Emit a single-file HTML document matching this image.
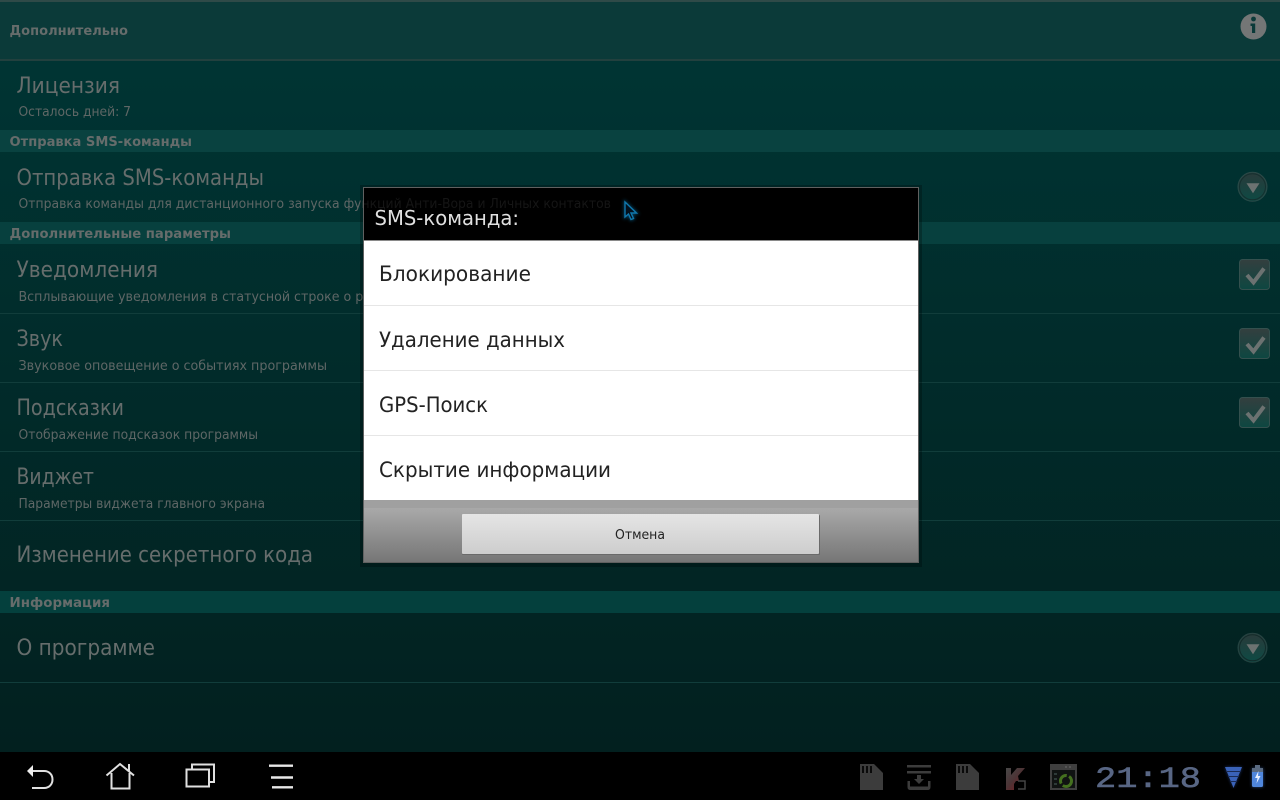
<!DOCTYPE html>
<html lang="ru">
<head>
<meta charset="utf-8">
<title>Дополнительно</title>
<style>
html,body{margin:0;padding:0;width:1280px;height:800px;overflow:hidden;background:#000}
svg{display:block}
text{font-family:"DejaVu Sans","Liberation Sans",sans-serif}
.h{font-size:13px;font-weight:bold;fill:#666c6b}
.t{font-size:22px;fill:#666d6c}
.s{font-size:13.5px;fill:#5f6766}
.i{font-size:21.5px;fill:#222}
</style>
</head>
<body>
<svg xmlns="http://www.w3.org/2000/svg" width="1280" height="800" viewBox="0 0 1280 800">
<defs>
<linearGradient id="bg" x1="0" y1="0" x2="0" y2="1"><stop offset="0" stop-color="#003635"/><stop offset="1" stop-color="#02201f"/></linearGradient>
<linearGradient id="foot" x1="0" y1="0" x2="0" y2="1"><stop offset="0" stop-color="#a9a9a9"/><stop offset="1" stop-color="#767676"/></linearGradient>
<linearGradient id="btn" x1="0" y1="0" x2="0" y2="1"><stop offset="0" stop-color="#e5e5e5"/><stop offset="1" stop-color="#cdcdcd"/></linearGradient>
<linearGradient id="cb" x1="0" y1="0" x2="0" y2="1"><stop offset="0" stop-color="#343f3f"/><stop offset="1" stop-color="#0d4741"/></linearGradient>
<linearGradient id="dd" x1="0" y1="0" x2="0" y2="1"><stop offset="0" stop-color="#2a3a3a"/><stop offset="1" stop-color="#0d4a44"/></linearGradient>
<linearGradient id="red" x1="0" y1="0" x2="1" y2="1"><stop offset="0" stop-color="#484848"/><stop offset=".45" stop-color="#4c3436"/><stop offset="1" stop-color="#7c1a1f"/></linearGradient>
<filter id="gl" x="-50%" y="-50%" width="200%" height="200%"><feGaussianBlur stdDeviation="1.5"/></filter>
<clipPath id="leftc"><rect x="0" y="0" width="363" height="800"/></clipPath>
<clipPath id="titlec"><rect x="364" y="188" width="554" height="52"/></clipPath>
</defs>

<rect width="1280" height="752" fill="url(#bg)"/>
<rect width="1280" height="2" fill="#2f4a48"/>
<rect y="2" width="1280" height="57" fill="#0b3a39"/>
<rect y="59" width="1280" height="2" fill="#22403e"/>
<rect y="130" width="1280" height="22" fill="#094240"/>
<rect y="222" width="1280" height="22" fill="#07403e"/>
<rect y="591" width="1280" height="22" fill="#04403d"/>
<g fill="#113d3b">
<rect y="313" width="1280" height="1"/><rect y="382" width="1280" height="1"/><rect y="451" width="1280" height="1"/><rect y="520" width="1280" height="1"/><rect y="682" width="1280" height="1"/>
</g>

<text class="h" x="9.500" y="35" textLength="118.500" lengthAdjust="spacingAndGlyphs">Дополнительно</text>
<text class="t" x="16.500" y="93" textLength="103.500" lengthAdjust="spacingAndGlyphs">Лицензия</text>
<text class="s" x="18.500" y="116" textLength="112.500" lengthAdjust="spacingAndGlyphs">Осталось дней: 7</text>
<text class="h" x="9.500" y="146" textLength="182.500" lengthAdjust="spacingAndGlyphs">Отправка SMS-команды</text>
<text class="t" x="16.500" y="185" textLength="247.500" lengthAdjust="spacingAndGlyphs">Отправка SMS-команды</text>
<text class="s" x="18.500" y="208" textLength="592.500" lengthAdjust="spacingAndGlyphs">Отправка команды для дистанционного запуска функций Анти-Вора и Личных контактов</text>
<text class="h" x="9.500" y="238" textLength="221.500" lengthAdjust="spacingAndGlyphs">Дополнительные параметры</text>
<text class="t" x="16.500" y="277" textLength="141.500" lengthAdjust="spacingAndGlyphs">Уведомления</text>
<text class="s" x="18.500" y="301" textLength="462.500" lengthAdjust="spacingAndGlyphs" clip-path="url(#leftc)">Всплывающие уведомления в статусной строке о работе программы</text>
<text class="t" x="16.500" y="346" textLength="46.500" lengthAdjust="spacingAndGlyphs">Звук</text>
<text class="s" x="18.500" y="370" textLength="308.500" lengthAdjust="spacingAndGlyphs">Звуковое оповещение о событиях программы</text>
<text class="t" x="16.500" y="415" textLength="107.500" lengthAdjust="spacingAndGlyphs">Подсказки</text>
<text class="s" x="18.500" y="439" textLength="239.500" lengthAdjust="spacingAndGlyphs">Отображение подсказок программы</text>
<text class="t" x="16.500" y="484" textLength="77.500" lengthAdjust="spacingAndGlyphs">Виджет</text>
<text class="s" x="18.500" y="508" textLength="246.500" lengthAdjust="spacingAndGlyphs">Параметры виджета главного экрана</text>
<text class="t" x="16.500" y="562" textLength="296.500" lengthAdjust="spacingAndGlyphs">Изменение секретного кода</text>
<text class="h" x="9.500" y="607" textLength="100.500" lengthAdjust="spacingAndGlyphs">Информация</text>
<text class="t" x="16.500" y="655" textLength="138.500" lengthAdjust="spacingAndGlyphs">О программе</text>

<!-- info icon -->
<circle cx="1253.500" cy="26.500" r="13" fill="#747676"/>
<circle cx="1253.500" cy="19" r="2.400" fill="#0b3a39"/>
<path d="M1250.500 23.500h4.700v9.500h-3.200v-7h-1.500z" fill="#0b3a39"/>

<!-- dropdown icons -->
<circle cx="1252.500" cy="186.800" r="14.500" fill="url(#dd)" stroke="#2b4a48" stroke-width="1"/>
<circle cx="1252.500" cy="186.800" r="13" fill="none" stroke="#15302f" stroke-width="1"/>
<path d="M1246.500 183.300h13l-6.500 10z" fill="#6c7271"/>
<circle cx="1252.500" cy="647.800" r="14.500" fill="url(#dd)" stroke="#264341" stroke-width="1"/>
<circle cx="1252.500" cy="647.800" r="13" fill="none" stroke="#122b2a" stroke-width="1"/>
<path d="M1246.500 644.300h13l-6.500 10z" fill="#6c7271"/>

<!-- checkboxes -->
<g fill="url(#cb)" stroke="#34504e" stroke-width="1">
<rect x="1239.500" y="259.500" width="30" height="30" rx="3"/>
<rect x="1239.500" y="328.500" width="30" height="30" rx="3"/>
<rect x="1239.500" y="397.500" width="30" height="30" rx="3"/>
</g>
<g fill="none" stroke="#6c7271" stroke-width="4">
<path d="M1247 275l6.500 7.500 10.500-14"/>
<path d="M1247 344l6.500 7.500 10.500-14"/>
<path d="M1247 413l6.500 7.500 10.500-14"/>
</g>

<!-- dialog -->
<rect x="360" y="185" width="562" height="382" fill="#000" opacity=".25"/>
<rect x="363" y="187" width="556" height="376" fill="#606060"/>
<rect x="364" y="188" width="554" height="52" fill="#000"/>
<g clip-path="url(#titlec)">
<text class="s" x="18.500" y="208" textLength="592.500" lengthAdjust="spacingAndGlyphs" style="fill:#151515">Отправка команды для дистанционного запуска функций Анти-Вора и Личных контактов</text>
</g>
<text x="374.500" y="225" font-size="20" fill="#e0e0e0" textLength="144.500" lengthAdjust="spacingAndGlyphs">SMS-команда:</text>
<rect x="364" y="240" width="554" height="1" fill="#8a8a8a"/>
<rect x="364" y="241" width="554" height="260" fill="#fff"/>
<rect x="364" y="305" width="554" height="1" fill="#e6e6e6"/>
<rect x="364" y="370" width="554" height="1" fill="#e6e6e6"/>
<rect x="364" y="435" width="554" height="1" fill="#e6e6e6"/>
<text class="i" x="379" y="281" textLength="152" lengthAdjust="spacingAndGlyphs">Блокирование</text>
<text class="i" x="379" y="347" textLength="186" lengthAdjust="spacingAndGlyphs">Удаление данных</text>
<text class="i" x="379" y="412" textLength="109" lengthAdjust="spacingAndGlyphs">GPS-Поиск</text>
<text class="i" x="379" y="477" textLength="232" lengthAdjust="spacingAndGlyphs">Скрытие информации</text>
<rect x="364" y="500" width="554" height="8" fill="#a0a0a0"/>
<rect x="364" y="508" width="554" height="54" fill="url(#foot)"/>
<rect x="462" y="515" width="358" height="40" rx="1" fill="#6a6a6a"/>
<rect x="462" y="514" width="357" height="40" rx="1" fill="url(#btn)"/>
<text x="615" y="539" font-size="13.500" fill="#222" textLength="50" lengthAdjust="spacingAndGlyphs">Отмена</text>

<!-- cursor -->
<path d="M625 202v15l3.500-3 2.500 5.500 2.500-1-2.500-5.500h5.500z" fill="none" stroke="#0f8ccc" stroke-width="2.500" opacity=".5" filter="url(#gl)"/>
<path d="M625 202v15l3.500-3 2.500 5.500 2.500-1-2.500-5.500h5.500z" fill="#03101c" stroke="#0f78ad" stroke-width="1.400"/>

<!-- nav bar -->
<rect y="752" width="1280" height="48" fill="#000"/>
<g fill="none" stroke="#e0e0e0" stroke-width="2">
<path d="M33 771h11c5.500 0 8.500 4 8.500 8.500s-3 8.500-8.500 8.500H32"/>
<path d="M106.500 775.500L120 764l14 11.500M129 764v7M111.500 773v15.500h18V773"/>
<path d="M186.500 769.500h22.500v17h-22.500zM192 769v-4.500h22v17.500h-5"/>
</g>
<path d="M269 765.700h24M271 777.500h22M272 787.300h21" fill="none" stroke="#e8e8e8" stroke-width="2.400"/>
<path d="M33 765v12l-6-6z" fill="#eee"/>

<!-- status icons -->
<g fill="#3c3c3c">
<path d="M860 764h14l9 9v17h-23z"/>
<path d="M956 764h14l9 9v17h-23z"/>
<rect x="907" y="765" width="24" height="2.500"/>
<rect x="907" y="771" width="24" height="2.500"/>
<path d="M917 775h4v4h3l-5 5-5-5h3z"/>
<path d="M907.500 781v6q0 3 3 3h17q3 0 3-3v-6h-2.500v5.500h-18V781z"/>
</g>
<g fill="#0a0a0a">
<rect x="862" y="766" width="2" height="7"/><rect x="866" y="766" width="2" height="7"/><rect x="870" y="766" width="2" height="7"/>
<rect x="958" y="766" width="2" height="7"/><rect x="962" y="766" width="2" height="7"/><rect x="966" y="766" width="2" height="7"/>
</g>
<path d="M1006 768h5v7l6-7h8l-7 8 1 5h-3l-2 3v6h-8z" fill="url(#red)"/>
<path d="M1018 781h7v8h-7" fill="none" stroke="#444" stroke-width="1.500"/>
<rect x="1050" y="764" width="27" height="26" fill="#3f3f3f"/>
<rect x="1052" y="770" width="23" height="18" fill="#101312"/>
<g fill="#2e3a38"><rect x="1054" y="773" width="3" height="2"/><rect x="1054" y="778" width="3" height="2"/><rect x="1054" y="783" width="3" height="2"/></g>
<g fill="#555"><rect x="1065" y="766" width="2" height="2"/><rect x="1069" y="766" width="2" height="2"/></g>
<circle cx="1066" cy="781" r="5.500" fill="none" stroke="#44701f" stroke-width="3" stroke-dasharray="12 2.500"/>

<text x="1095" y="787" font-size="30" fill="#586684" stroke="#586684" stroke-width=".6" style="font-family:'Liberation Mono',monospace" textLength="106" lengthAdjust="spacingAndGlyphs">21:18</text>

<path d="M1225 767h17l-8.500 21z" fill="#2d56b0" opacity=".6" filter="url(#gl)"/>
<path d="M1225 767h17l-8.500 21z" fill="#3a62b8"/>
<g fill="#1a2b55"><rect x="1226" y="771" width="15" height="1"/><rect x="1228" y="776" width="11" height="1"/><rect x="1230" y="781" width="7" height="1"/></g>
<rect x="1252" y="768" width="11" height="19" rx="1.500" fill="#4a80d8" opacity=".6" filter="url(#gl)"/>
<rect x="1255" y="765" width="5" height="3" fill="#5a6a80"/>
<rect x="1252" y="768" width="11" height="19" rx="1.500" fill="#4f86dc"/>
<rect x="1252" y="768" width="11" height="4" fill="#5a6a80"/>
<path d="M1258.500 771l-3.500 7h2.500l-1 5.500 4-7.500h-2.500z" fill="#e8f0ff"/>
</svg>
</body>
</html>
